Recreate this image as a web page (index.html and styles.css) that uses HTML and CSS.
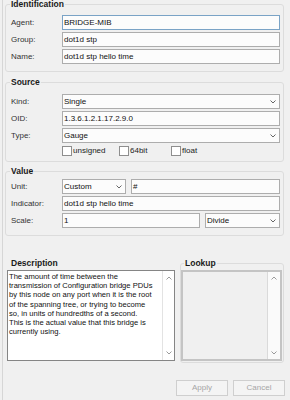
FILE: index.html
```html
<!DOCTYPE html>
<html>
<head>
<meta charset="utf-8">
<link rel="stylesheet" href="styles.css">
</head>
<body>
<div class="frame">
  <fieldset class="group g-ident">
    <legend>Identification</legend>
    <div class="form">
      <span class="lbl">Agent:</span><div class="field focus">BRIDGE-MIB</div>
      <span class="lbl">Group:</span><div class="field">dot1d stp</div>
      <span class="lbl">Name:</span><div class="field">dot1d stp hello time</div>
    </div>
  </fieldset>

  <fieldset class="group g-source">
    <legend>Source</legend>
    <div class="form">
      <span class="lbl">Kind:</span>
      <div class="field select"><span>Single</span><svg class="chev" width="6" height="4" viewBox="0 0 6 4"><polyline points="0.5,0.5 3,3 5.5,0.5"/></svg></div>
      <span class="lbl">OID:</span><div class="field">1.3.6.1.2.1.17.2.9.0</div>
      <span class="lbl">Type:</span>
      <div class="field select"><span>Gauge</span><svg class="chev" width="6" height="4" viewBox="0 0 6 4"><polyline points="0.5,0.5 3,3 5.5,0.5"/></svg></div>
      <span></span>
      <div class="checks">
        <span class="chk w1"><span class="box"></span>unsigned</span>
        <span class="chk w2"><span class="box"></span>64bit</span>
        <span class="chk"><span class="box"></span>float</span>
      </div>
    </div>
  </fieldset>

  <fieldset class="group g-value">
    <legend>Value</legend>
    <div class="form">
      <span class="lbl">Unit:</span>
      <div class="pair unit">
        <div class="field select"><span>Custom</span><svg class="chev" width="6" height="4" viewBox="0 0 6 4"><polyline points="0.5,0.5 3,3 5.5,0.5"/></svg></div>
        <div class="field">#</div>
      </div>
      <span class="lbl">Indicator:</span><div class="field">dot1d stp hello time</div>
      <span class="lbl">Scale:</span>
      <div class="pair scale">
        <div class="field">1</div>
        <div class="field select"><span>Divide</span><svg class="chev" width="6" height="4" viewBox="0 0 6 4"><polyline points="0.5,0.5 3,3 5.5,0.5"/></svg></div>
      </div>
    </div>
  </fieldset>

  <div class="lower">
    <div class="desc">
      <div class="title">Description</div>
      <div class="textarea">
        <div class="text">The amount of time between the<br>transmission of Configuration bridge PDUs<br>by this node on any port when it is the root<br>of the spanning tree, or trying to become<br>so, in units of hundredths of a second.<br>This is the actual value that this bridge is<br>currently using.</div>
        <div class="vscroll">
          <svg class="arr" width="6" height="4" viewBox="0 0 6 4"><polyline points="0.5,3.5 3,1 5.5,3.5"/></svg>
          <svg class="arr" width="6" height="4" viewBox="0 0 6 4"><polyline points="0.5,0.5 3,3 5.5,0.5"/></svg>
        </div>
      </div>
    </div>
    <fieldset class="group g-lookup">
      <legend>Lookup</legend>
      <div class="list">
        <div class="listbody"></div>
        <div class="vscroll">
          <svg class="arr" width="6" height="4" viewBox="0 0 6 4"><polyline points="0.5,3.5 3,1 5.5,3.5"/></svg>
          <svg class="arr" width="6" height="4" viewBox="0 0 6 4"><polyline points="0.5,0.5 3,3 5.5,0.5"/></svg>
        </div>
      </div>
    </fieldset>
  </div>

  <div class="buttons">
    <div class="btn">Apply</div>
    <div class="btn">Cancel</div>
  </div>
</div>
</body>
</html>
```

FILE: styles.css
```css
* { box-sizing: border-box; }
html, body { margin: 0; padding: 0; }
body {
  background: #f0f0f0;
  font-family: "Liberation Sans", Arial, sans-serif;
  font-size: 8px;
  color: #1e1e1e;
  width: 290px;
  height: 400px;
  overflow: hidden;
}
.frame {
  margin-left: 2px;
  border-left: 1px solid #d6d6d6;
  padding: 0 6px 0 2px;
  height: 400px;
}
fieldset.group {
  margin: 0;
  border: 1px solid #dcdcdc;
  border-radius: 3px;
  padding: 0 3px 7px 5px;
  min-width: 0;
}
legend {
  font-weight: bold;
  font-size: 8.5px;
  line-height: 9px;
  padding: 0 1px;
  margin-left: -1px;
  color: #1a1a1a;
}
.g-ident { margin-top: 0 !important; padding-top: 7px !important; }
.g-ident legend { line-height: 8px; }
.g-source { margin-top: 6px !important; padding-top: 7px !important; padding-bottom: 5px !important; }
.g-value { margin-top: 5px !important; padding-top: 3px !important; padding-bottom: 7px !important; }

.form {
  display: grid;
  grid-template-columns: 51px 1fr;
  row-gap: 2px;
  align-items: center;
}
.lbl { color: #333; line-height: 15px; }
.field {
  height: 15px;
  border: 1px solid #adadad;
  background: #fcfcfc;
  padding: 0 1px;
  line-height: 13px;
  white-space: nowrap;
  overflow: hidden;
  color: #111;
}
.field.focus { border-color: #7aa3c6; }
.field.select {
  display: flex;
  align-items: center;
  justify-content: space-between;
  padding-right: 3px;
}
.chev polyline, .arr polyline {
  fill: none;
  stroke: #666;
  stroke-width: 1;
}
.checks {
  display: flex;
  align-items: center;
  height: 10px;
  margin-top: 1px;
  color: #222;
}
.chk { display: flex; align-items: center; gap: 1px; line-height: 10px; }
.chk.w1 { width: 57px; }
.chk.w2 { width: 52px; }
.box {
  width: 10px;
  height: 10px;
  border: 1px solid #8e8e8e;
  background: #fff;
}
.pair { display: flex; gap: 5px; }
.unit .field:first-child { width: 64px; flex: none; }
.unit .field:last-child { flex: 1; }
.scale .field:first-child { width: 138px; flex: none; }
.scale .field:last-child { flex: 1; }

.lower {
  display: grid;
  grid-template-columns: 168px 104px;
  column-gap: 5px;
  margin-top: 23px;
  margin-left: 2px;
}
.desc .title {
  font-weight: bold;
  font-size: 8.5px;
  line-height: 9px;
  padding-left: 4px;
  color: #1a1a1a;
}
.textarea {
  margin-top: 2px;
  height: 91px;
  border: 1px solid #858585;
  background: #fff;
  display: flex;
}
.textarea .text {
  flex: 1;
  padding: 1px 0 0 1px;
  font-size: 7.6px;
  line-height: 9.2px;
  color: #111;
  white-space: nowrap;
  overflow: hidden;
}
.vscroll {
  width: 12px;
  border-left: 1px solid #e3e3e3;
  background: #fff;
  display: flex;
  flex-direction: column;
  justify-content: space-between;
  align-items: center;
  padding: 5px 0 5px;
}
.arr polyline { stroke: #9a9a9a; }
.g-lookup {
  padding: 0 1px 1px 0 !important;
  border-bottom: 1px solid #dcdcdc;
}
.g-lookup legend { margin-left: 3px; }
.list {
  margin-top: 2px;
  height: 91px;
  border: 2px solid #c4c4c4;
  background: #f0f0f0;
  display: flex;
}
.listbody { flex: 1; }
.list .vscroll { width: 13px; background: #fafafa; border-left: 1px solid #dadada; padding: 4px 0 4px; }

.buttons {
  display: flex;
  justify-content: flex-end;
  gap: 5px;
  margin-top: 17px;
  margin-right: -1px;
}
.btn {
  width: 52px;
  height: 16px;
  border: 1px solid #cfcfcf;
  background: #f4f4f4;
  color: #a6a6a6;
  text-align: center;
  line-height: 14px;
}
```
